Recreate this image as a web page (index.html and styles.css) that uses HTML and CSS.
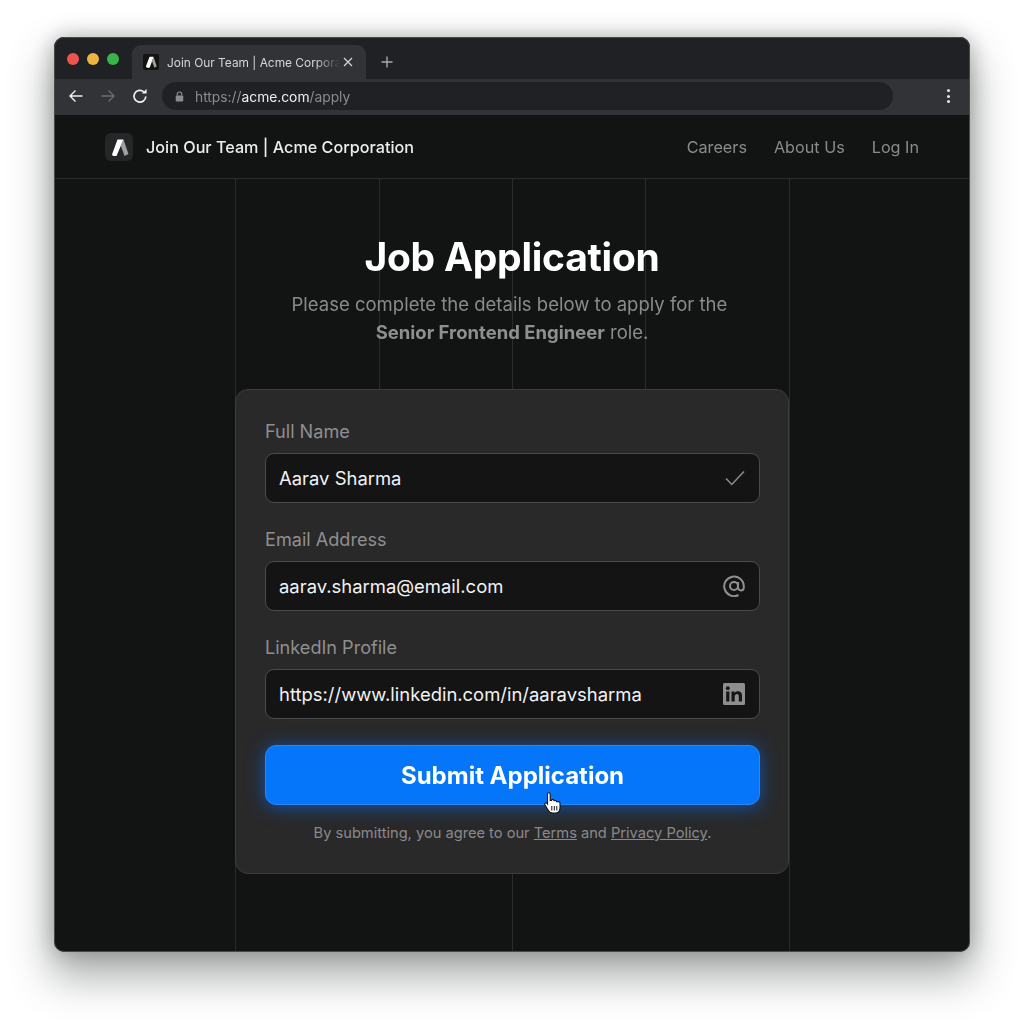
FILE: index.html
```html
<!DOCTYPE html>
<html lang="en">
<head>
<meta charset="utf-8">
<title>Join Our Team | Acme Corporation</title>
<link rel="stylesheet" href="styles.css">
</head>
<body>
<div class="window">
  <div class="tabstrip">
    <div class="lights"><span class="light red"></span><span class="light yellow"></span><span class="light green"></span></div>
    <div class="tab">
      <span class="favicon"><svg viewBox="0 0 28 28" width="16" height="16"><path d="M5 22 L11.500 5 H18.500 L17 9.500 L11.500 24 H7 Z" fill="#fff"/><path d="M15.500 12 L18.500 5 L24 21.500 L20 24 Z" fill="#a0a0a0"/></svg></span>
      <span class="tab-title">Join Our Team | Acme Corpora</span>
      <svg class="tab-close" viewBox="0 0 10 10" width="10" height="10"><path d="M1 1 L9 9 M9 1 L1 9" stroke="#d6d6d8" stroke-width="1.200" fill="none"/></svg>
    </div>
    <svg class="newtab" viewBox="0 0 12 12" width="12" height="12"><path d="M6 0.500 V11.500 M0.500 6 H11.500" stroke="#a9a9ac" stroke-width="1.400" fill="none"/></svg>
  </div>
  <div class="toolbar">
    <svg class="tool" viewBox="0 0 16 16" width="16" height="16"><path d="M14.500 8 H2 M7.500 2.500 L2 8 L7.500 13.500" stroke="#f0f0f0" stroke-width="1.400" fill="none"/></svg>
    <svg class="tool" viewBox="0 0 16 16" width="16" height="16"><path d="M1.500 8 H14 M8.500 2.500 L14 8 L8.500 13.500" stroke="#6e6e72" stroke-width="1.300" fill="none"/></svg>
    <svg class="tool" viewBox="0 0 16 16" width="16" height="16"><path d="M13.800 8.500 A5.900 5.900 0 1 1 11.800 3.800" stroke="#f0f0f0" stroke-width="1.700" fill="none"/><path d="M9.800 5.600 H14.600 V0.900 Z" fill="#f0f0f0"/></svg>
    <div class="omnibox">
      <svg class="lock" viewBox="0 0 10 12" width="9" height="11"><path d="M2.500 5 V3.500 a2.500 2.500 0 0 1 5 0 V5" stroke="#8c8c90" stroke-width="1.300" fill="none"/><rect x="0.800" y="5" width="8.400" height="6.500" rx="1" fill="#8c8c90"/></svg>
      <span class="url"><span class="dim">https://</span>acme.com<span class="dim">/apply</span></span>
    </div>
    <span class="kebab"><i></i><i></i><i></i></span>
  </div>
  <header class="sitenav">
    <div class="brand">
      <span class="logo"><svg viewBox="0 0 28 28" width="28" height="28"><path d="M7 21.500 L12.500 6.500 H18.500 L17 10 L11.500 23 H8 Z" fill="#fff"/><path d="M15.800 12.500 L18.500 6.500 L23.500 21 L19.500 23 Z" fill="#a0a0a0"/></svg></span>
      <span class="brand-name">Join Our Team | Acme Corporation</span>
    </div>
    <nav class="links"><a>Careers</a><a>About Us</a><a>Log In</a></nav>
  </header>
  <main class="page">
    <i class="rule r1"></i><i class="rule r2"></i><i class="rule r3"></i><i class="rule r4"></i><i class="rule r5"></i>
    <h1>Job Application</h1>
    <p class="lead">Please complete the details below to apply for the&nbsp;<br><b>Senior Frontend Engineer</b> role.</p>
    <form class="card">
      <div class="label">Full Name</div>
      <div class="field"><span>Aarav Sharma</span>
        <svg viewBox="0 0 20 20" width="20" height="20"><path d="M1 10.500 L6.800 16.500 L19 3.500" stroke="#8e8e8e" stroke-width="1.500" fill="none"/></svg></div>
      <div class="label">Email Address</div>
      <div class="field"><span>aarav.sharma@email.com</span>
        <svg viewBox="0 0 22 22" width="22" height="22"><circle cx="11" cy="11" r="4" stroke="#909090" stroke-width="2" fill="none"/><path d="M15 7 V12.500 a2.800 2.800 0 0 0 5.800 0 V11 A9.800 9.800 0 1 0 15.500 20" stroke="#909090" stroke-width="2" fill="none"/></svg></div>
      <div class="label">LinkedIn Profile</div>
      <div class="field"><span>https://www.linkedin.com/in/aaravsharma</span>
        <svg viewBox="0 0 22 22" width="22" height="22"><rect width="22" height="22" rx="1.500" fill="#8e8e8e"/><rect x="3.200" y="8.500" width="3.200" height="10" fill="#151516"/><circle cx="4.800" cy="5.200" r="1.900" fill="#151516"/><path d="M8.500 8.500 H11.600 V10 C12.300 8.900 13.500 8.300 15 8.300 C17.700 8.300 19 10 19 12.800 V18.500 H15.800 V13.400 C15.800 12 15.200 11.100 14 11.100 C12.700 11.100 11.700 12 11.700 13.500 V18.500 H8.500 Z" fill="#151516"/></svg></div>
      <div class="submit-wrap">
        <button class="submit" type="button">Submit Application</button>
        <svg class="cursor" viewBox="0 0 18 22" width="18" height="22"><path d="M3.500 1.800 C3.500 0.400 6.200 0.400 6.200 1.800 V8.500 H7.500 C7.500 7 10 7 10 8.500 V9.300 C10 8.200 12.500 8.200 12.500 9.600 V10.300 C12.500 9.300 16 9.300 16 11 V15.500 C16 18.500 14.500 21 11.500 21 H8.800 C6.500 21 5.200 19.800 4.200 18.200 L0.900 12.800 C0.200 11.400 1.800 10.300 3 11.300 L3.500 12 Z" fill="#fff" stroke="#111" stroke-width="1.100"/><path d="M7.800 14 V18.500 M10.300 14 V18.500 M12.800 14 V18.500" stroke="#111" stroke-width="1"/></svg>
      </div>
      <p class="terms">By submitting, you agree to our <u>Terms</u> and <u>Privacy Policy</u>.</p>
    </form>
  </main>
</div>
</body>
</html>
```
FILE: styles.css
```css
* { box-sizing: border-box; }
html, body { margin: 0; height: 100%; }
body {
  background: #fff;
  padding: 37px 54px 72px;
  font-family: Inter, "Liberation Sans", sans-serif;
  overflow: hidden;
}
.window {
  position: relative;
  width: 916px;
  height: 915px;
  border-radius: 10px;
  overflow: hidden;
  display: flex;
  flex-direction: column;
  background: #121414;
}
.window::after {
  content: "";
  position: absolute;
  inset: 0;
  border-radius: 10px;
  border: 1px solid #48494b;
  border-bottom-width: 1.500px;
  pointer-events: none;
}
body::before {
  content: "";
  position: fixed;
  left: 54px; top: 37px;
  width: 916px; height: 915px;
  border-radius: 10px;
  box-shadow: 0 22px 40px 4px rgba(60, 64, 64, 0.42), 0 0 22px rgba(0, 0, 0, 0.28);
  z-index: -1;
}
.tabstrip {
  height: 42px;
  background: #202124;
  display: flex;
  align-items: flex-end;
  padding-left: 13px;
  flex: none;
}
.lights { display: flex; gap: 8px; align-self: flex-start; margin-top: 16px; }
.light { width: 12px; height: 12px; border-radius: 50%; }
.red { background: #ee5350; }
.yellow { background: #edb540; }
.green { background: #38b44a; }
.tab {
  width: 234px;
  height: 34px;
  margin-left: 13px;
  background: #323337;
  border-radius: 9px 9px 0 0;
  display: flex;
  align-items: center;
  padding: 0 10px 0 11px;
  color: #d6d6d8;
  font-size: 11.900px;
}
.favicon { width: 16px; height: 16px; background: #131314; border-radius: 2px; flex: none; display: flex; }
.tab-title {
  margin-left: 8px;
  width: 172px;
  white-space: nowrap;
  -webkit-mask-image: linear-gradient(to right, #000 86%, rgba(0,0,0,0.1) 99%);
  mask-image: linear-gradient(to right, #000 86%, rgba(0,0,0,0.1) 99%);
}
.tab-close { margin-left: 4px; flex: none; }
.newtab { margin: 0 0 11px 15px; }
.toolbar {
  height: 36px;
  flex: none;
  background: #323337;
  display: flex;
  align-items: center;
  padding: 0 20px 2px 14px;
}
.tool { margin-right: 16px; flex: none; }
.omnibox {
  width: 731px;
  height: 28px;
  margin-left: -2px;
  background: #202124;
  border-radius: 14px;
  display: flex;
  align-items: center;
  padding: 1px 0 0 13px;
  font-size: 13.800px;
  color: #eee;
}
.lock { flex: none; }
.url { margin-left: 11px; }
.dim { color: #8b8b8f; }
.kebab { margin-left: auto; display: flex; flex-direction: column; gap: 2.500px; }
.kebab i { width: 3px; height: 3px; border-radius: 50%; background: #e4e4e4; }
.sitenav {
  height: 64px;
  flex: none;
  border-bottom: 1px solid #2b2c2d;
  display: flex;
  align-items: center;
  justify-content: space-between;
  padding: 0 51px;
}
.brand { display: flex; align-items: center; gap: 13px; }
.logo { width: 28px; height: 28px; border-radius: 6px; background: #252628; display: flex; }
.brand-name { color: #ececec; font-size: 16.200px; font-weight: 500; }
.links { display: flex; gap: 27px; color: #8a8a8c; font-size: 16.200px; }
.page {
  position: relative;
  flex: 1;
  display: flex;
  flex-direction: column;
  align-items: center;
  padding-top: 55px;
}
.rule { position: absolute; top: 0; bottom: 1px; width: 1px; background: #2a2b2c; }
.r1 { left: 181px; }
.r2 { left: 325px; height: 210px; bottom: auto; }
.r3 { left: 458px; }
.r4 { left: 591px; height: 210px; bottom: auto; }
.r5 { left: 735px; }
h1 {
  position: relative;
  margin: 0;
  color: #fff;
  font-size: 39px;
  line-height: 46px;
  font-weight: 700;
  letter-spacing: -0.250px;
}
.lead {
  position: relative;
  margin: 10px 0 0;
  text-align: center;
  color: #8a8a8c;
  font-size: 18.500px;
  line-height: 28px;
}
.lead b { font-weight: 700; color: #8f8f90; }
.card {
  position: relative;
  width: 554px;
  height: 485px;
  margin-top: 43px;
  background: #29292a;
  border: 1px solid #3c3d3f;
  border-radius: 13px;
  padding: 29px 28px 0 29px;
}
.label { color: #8f8f90; font-size: 18.100px; line-height: 24px; margin-bottom: 10px; }
.field {
  height: 50px;
  margin-bottom: 24px;
  background: #141415;
  border: 1px solid #4a4b4d;
  border-radius: 9px;
  display: flex;
  align-items: center;
  justify-content: space-between;
  padding: 0 14px 0 13px;
  color: #f2f2f2;
  font-size: 18.450px;
}
.submit-wrap { position: relative; margin-top: 26px; }
.submit {
  display: block;
  width: 100%;
  height: 60px;
  background: #0575fa;
  border: 1px solid #2f86f0;
  border-radius: 11px;
  box-shadow: 0 2px 18px rgba(5, 110, 255, 0.6);
  color: #fff;
  font: 700 24px Inter, "Liberation Sans", sans-serif;
}
.cursor { position: absolute; left: 279px; top: 47px; }
.terms {
  margin: 18px 0 0;
  text-align: center;
  color: #8a8a8c;
  font-size: 14.650px;
  line-height: 20px;
}
```
